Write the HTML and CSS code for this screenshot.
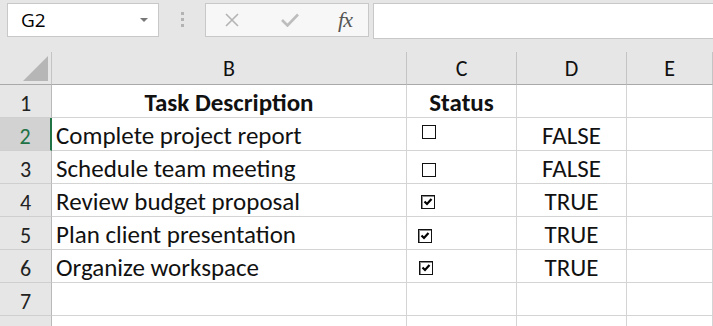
FILE: index.html
```html
<!DOCTYPE html>
<html lang="en">
<head>
  <meta charset="UTF-8" />
  <title>Task checklist</title>
  <link rel="stylesheet" href="styles.css">
</head>
<body>

  <div class="toolbar">
    <div class="namebox">
      <span class="ref">G2</span>
      <span class="caret"></span>
    </div>
    <div class="grip"><i></i><i></i><i></i></div>
    <div class="fbtns">
      <svg class="ico" width="18" height="14" viewBox="0 0 18 14">
        <path d="M3 1 L15 13 M15 1 L3 13" stroke="#b4b4b4" stroke-width="1.6" fill="none"/>
      </svg>
      <svg class="ico" width="20" height="14" viewBox="0 0 20 14">
        <path d="M2 7 L7.5 12.5 L18 1.5" stroke="#bdbdbd" stroke-width="2.6" fill="none"/>
      </svg>
      <span class="fx">fx</span>
    </div>
    <div class="finput"></div>
  </div>

  <div class="sheet">
    <div class="corner">
      <svg width="25" height="25" viewBox="0 0 25 25"><polygon points="25,0 25,25 0,25" fill="#b6b6b6"/></svg>
    </div>
    <div class="colhead">B</div>
    <div class="colhead">C</div>
    <div class="colhead">D</div>
    <div class="colhead">E</div>

    <div class="rowhead">1</div>
    <div class="cell title">Task Description</div>
    <div class="cell title">Status</div>
    <div class="cell"></div>
    <div class="cell"></div>

    <div class="rowhead current">2</div>
    <div class="cell">Complete project report</div>
    <div class="cell"><span class="cb cb2"></span></div>
    <div class="cell mid">FALSE</div>
    <div class="cell"></div>

    <div class="rowhead">3</div>
    <div class="cell">Schedule team meeting</div>
    <div class="cell"><span class="cb cb3"></span></div>
    <div class="cell mid">FALSE</div>
    <div class="cell"></div>

    <div class="rowhead">4</div>
    <div class="cell">Review budget proposal</div>
    <div class="cell"><span class="cb on cb4"><svg width="10" height="10" viewBox="0 0 10 10"><path d="M1.5 4.5 L4 7 L8.5 2" stroke="#000" stroke-width="2.2" fill="none"/></svg></span></div>
    <div class="cell mid">TRUE</div>
    <div class="cell"></div>

    <div class="rowhead">5</div>
    <div class="cell">Plan client presentation</div>
    <div class="cell"><span class="cb on cb5"><svg width="10" height="10" viewBox="0 0 10 10"><path d="M1.5 4.5 L4 7 L8.5 2" stroke="#000" stroke-width="2.2" fill="none"/></svg></span></div>
    <div class="cell mid">TRUE</div>
    <div class="cell"></div>

    <div class="rowhead">6</div>
    <div class="cell">Organize workspace</div>
    <div class="cell"><span class="cb on cb6"><svg width="10" height="10" viewBox="0 0 10 10"><path d="M1.5 4.5 L4 7 L8.5 2" stroke="#000" stroke-width="2.2" fill="none"/></svg></span></div>
    <div class="cell mid">TRUE</div>
    <div class="cell"></div>

    <div class="rowhead">7</div>
    <div class="cell"></div>
    <div class="cell"></div>
    <div class="cell"></div>
    <div class="cell"></div>

    <div class="rowhead">8</div>
    <div class="cell"></div>
    <div class="cell"></div>
    <div class="cell"></div>
    <div class="cell"></div>
  </div>

</body>
</html>
```

FILE: styles.css
```css
body {
  margin: 0;
  background: #e6e6e6;
  overflow: hidden;
  font-family: Carlito, Lato, "Liberation Sans", sans-serif;
  color: #111;
}
.toolbar {
  display: flex;
  align-items: flex-start;
  height: 52px;
  padding: 3px 0 0 7px;
  box-sizing: border-box;
}
.namebox {
  display: flex;
  align-items: center;
  justify-content: space-between;
  width: 152px;
  height: 34px;
  box-sizing: border-box;
  padding: 0 10px 0 13px;
  background: white;
  border: 1px solid #c8c8c8;
}
.ref {
  font-family: "Open Sans", sans-serif;
  font-size: 19px;
  color: #000;
}
.caret {
  width: 0;
  height: 0;
  border-left: 4px solid transparent;
  border-right: 4px solid transparent;
  border-top: 4px solid #777;
}
.grip {
  width: 46px;
  display: flex;
  flex-direction: column;
  align-items: center;
  gap: 3px;
  padding-top: 9px;
}
.grip i {
  width: 3px;
  height: 3px;
  background: #b3b3b3;
}
.fbtns {
  display: flex;
  align-items: center;
  width: 164px;
  height: 34px;
  box-sizing: border-box;
  padding: 0 16px 0 17px;
  justify-content: space-between;
  background: #f7f7f7;
  border: 1px solid #c8c8c8;
}
.fx {
  font-family: "Liberation Serif", serif;
  font-style: italic;
  font-size: 22px;
  color: #555;
  letter-spacing: -1px;
}
.finput {
  flex: 1;
  height: 34px;
  margin-left: 4px;
  margin-right: -10px;
  background: white;
  border: 1px solid #c8c8c8;
}
.sheet {
  display: grid;
  grid-template-columns: 52px 355px 110px 110px 1fr;
  grid-auto-rows: 33px;
  background: white;
}
.corner, .colhead, .rowhead {
  background: #e6e6e6;
  box-sizing: border-box;
}
.corner {
  display: flex;
  align-items: flex-end;
  justify-content: flex-end;
  padding: 0 3px 3px 0;
  border-right: 1px solid #c4c4c4;
  border-bottom: 1px solid #a9a9a9;
}
.colhead {
  text-align: center;
  font-size: 22px;
  line-height: 33px;
  border-right: 1px solid #c4c4c4;
  border-bottom: 1px solid #a9a9a9;
}
.rowhead {
  text-align: center;
  font-size: 22px;
  line-height: 33px;
  padding-top: 2px;
  border-right: 1px solid #b9b9b9;
  border-bottom: 1px solid #cfcfcf;
  color: #222;
}
.rowhead.current {
  background: #d2d2d2;
  color: #217346;
  border-right: 2px solid #217346;
}
.cell {
  position: relative;
  box-sizing: border-box;
  padding: 1px 0 0 4px;
  font-size: 25px;
  line-height: 33px;
  white-space: nowrap;
  border-right: 1px solid #d4d4d4;
  border-bottom: 1px solid #d4d4d4;
}
.cell.title {
  font-weight: bold;
  text-align: center;
  padding-left: 0;
}
.cell.mid {
  text-align: center;
  padding-left: 0;
}
.cb {
  position: absolute;
  width: 14px;
  height: 14px;
  box-sizing: border-box;
  border: 1.5px solid #111;
  background: white;
}
.cb.on {
  display: flex;
  align-items: center;
  justify-content: center;
  box-shadow: inset 1px 1px 0 #8c8c8c;
}
.cb2 { left: 15px; top: 7px; }
.cb3 { left: 15px; top: 12px; }
.cb4 { left: 14px; top: 11px; }
.cb5 { left: 11px; top: 12px; }
.cb6 { left: 12px; top: 11px; }
```
